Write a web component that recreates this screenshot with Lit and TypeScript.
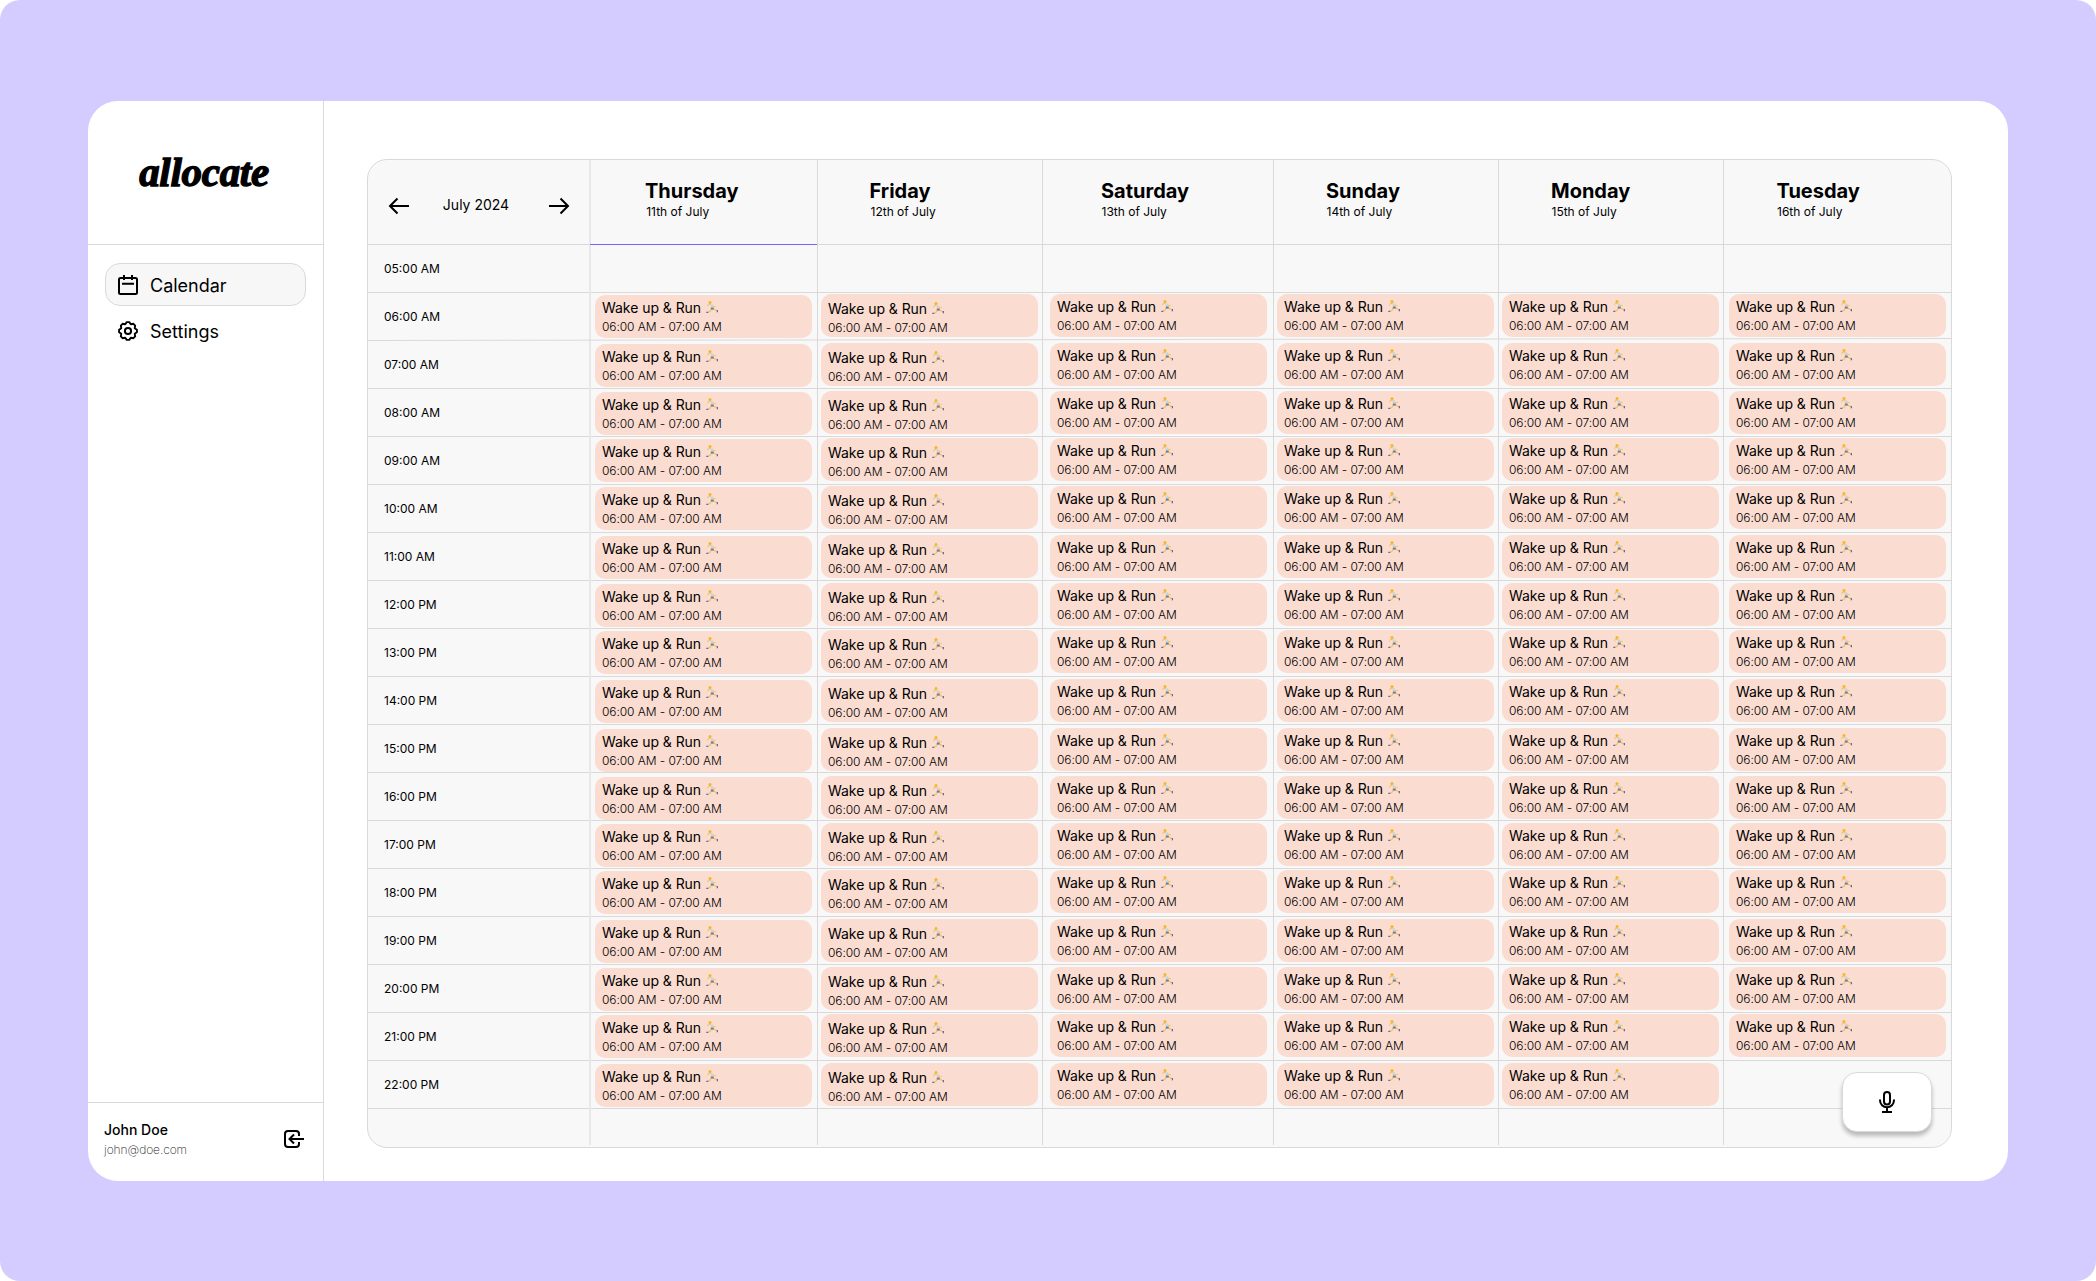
import { LitElement, html, css } from "lit";
import { customElement } from "lit/decorators.js";
import { styleMap } from "lit/directives/style-map.js";

interface Day {
  name: string;
  date: string;
  headPad: number;
  nudge: number;
  width: number;
  inset: number;
  lift: number;
  textDrop: number;
  count: number;
}

const DAYS: Day[] = [
  { name: "Thursday", date: "11th of July", headPad: 55, nudge: 1.2, width: 228, inset: 4, lift: 0, textDrop: 0, count: 17 },
  { name: "Friday", date: "12th of July", headPad: 51.5, nudge: 1, width: 225, inset: 3, lift: 1, textDrop: 2, count: 17 },
  { name: "Saturday", date: "13th of July", headPad: 58, nudge: 0.5, width: 231, inset: 7, lift: 1, textDrop: 0, count: 17 },
  { name: "Sunday", date: "14th of July", headPad: 52, nudge: 0.5, width: 225, inset: 3, lift: 1, textDrop: 0, count: 17 },
  { name: "Monday", date: "15th of July", headPad: 52, nudge: 0.5, width: 225, inset: 3, lift: 1, textDrop: 0, count: 17 },
  { name: "Tuesday", date: "16th of July", headPad: 52.5, nudge: 0.5, width: 228, inset: 5, lift: 1, textDrop: 0, count: 16 },
];

const HOURS = ["05:00 AM", "06:00 AM", "07:00 AM", "08:00 AM", "09:00 AM", "10:00 AM", "11:00 AM", "12:00 PM", "13:00 PM", "14:00 PM", "15:00 PM", "16:00 PM", "17:00 PM", "18:00 PM", "19:00 PM", "20:00 PM", "21:00 PM", "22:00 PM"];

// Gap between an hour line and the event below it, one per hour from 6 AM.
const GAPS = [2, 3, 3, 2, 2, 3, 3, 2, 3, 4, 4, 3, 2, 3, 3, 2, 3];

// Outline of the settings gear: eight blunt teeth around (10, 10).
const gearPoints = Array.from({ length: 8 }, (_, i) =>
  [[-8, 9], [8, 9], [22.5, 7.3]].map(([offset, r]) => {
    const a = ((i * 45 + offset) * Math.PI) / 180;
    return `${(10 + r * Math.sin(a)).toFixed(2)},${(10 - r * Math.cos(a)).toFixed(2)}`;
  }).join(" ")
).join(" ");

const runner = html`<svg class="runner" viewBox="0 0 12 12">
  <path d="M4.6 3.4 L2 3.6 L1.6 5.4 M6.6 4 L8 6 L9.8 5.4" stroke="#f3c75c" stroke-width="1" fill="none" />
  <path d="M4.3 3 L6.8 3.2 L7.4 7 L5 7.2Z" fill="#cdd5dc" />
  <path d="M5 6.6 L7.5 6.6 L8.2 8.6 L5.6 8.8 L4.6 8.4Z" fill="#7d7f86" />
  <path d="M5 8.4 L3.8 10.6 L2.2 11 M7.8 8.2 L10.8 9.8" stroke="#f0bf4e" stroke-width="1.1" fill="none" />
  <path d="M0.3 11.3 L2.3 11.3 M11.3 9 L11.3 11.3" stroke="#3c4a9c" stroke-width="1" fill="none" />
  <circle cx="4" cy="1.5" r="1.5" fill="#f5b820" />
</svg>`;

@customElement("app-root")
export class AppRoot extends LitElement {
  static styles = css`
    :host { display: block; width: 2096px; height: 1281px; background: #fff; font-family: Inter, "Liberation Sans", sans-serif; color: #000; }
    * { box-sizing: border-box; }
    svg { display: block; flex: none; fill: none; stroke: #000; stroke-width: 2; }
    .backdrop { height: 1281px; padding: 101px 88px 100px; background: #d4ccff; border-radius: 20px; }
    .window { height: 1080px; display: flex; background: #fff; border-radius: 30px; overflow: hidden; }
    .sidebar { width: 236px; border-right: 1px solid #d9d9d9; display: flex; flex-direction: column; }
    .brand { height: 144px; border-bottom: 1px solid #d9d9d9; display: flex; justify-content: center; padding: 43px 3px 0 0; }
    .logo { font: italic 700 41px/56px "Liberation Serif", serif; letter-spacing: -0.3px; -webkit-text-stroke: 1.3px #000; }
    .nav { flex: 1; padding: 18px 17px; display: flex; flex-direction: column; gap: 3px; }
    .item { height: 43px; border: 1px solid transparent; border-radius: 15px; display: flex; align-items: center; gap: 12px; padding-left: 12px; font-size: 18px; line-height: 22px; }
    .item span { margin-top: 2px; }
    .item.active { background: #f7f7f7; border-color: #d9d9d9; }
    .user { height: 79px; border-top: 1px solid #d9d9d9; display: flex; justify-content: space-between; padding: 18px 19px 0 16px; }
    .user-name { font-size: 14px; line-height: 18px; font-weight: 500; }
    .mail { font-size: 12px; line-height: 15px; font-weight: 250; letter-spacing: -0.08px; color: #222; margin-top: 3px; }
    .exit { margin-top: 9px; }
    .main { flex: 1; padding: 58px 56px 33px 43px; }
    .calendar { position: relative; height: 989px; width: 1585px; border: 1px solid #d9d9d9; border-radius: 20px; background: #f8f8f8; display: flex; overflow: hidden; }
    .times { width: 221px; }
    .col-head { height: 85px; border-bottom: 1px solid #d9d9d9; }
    .month { display: flex; align-items: center; justify-content: space-between; padding: 7px 19px 0 20px; font-size: 14px; }
    .month span { margin: 0 6px 2px 0; }
    .hour { height: 48px; border-bottom: 1px solid #d9d9d9; padding-left: 16px; font-size: 12px; line-height: 48px; }
    .day { height: 985px; border-left: 1px solid #d9d9d9; }
    .day:nth-child(2) { border-left: 2px solid #e8e8e8; }
    .day:nth-child(2) .col-head { border-bottom-color: #7b61ff; margin-left: -1px; }
    .day-name { font-size: 20px; line-height: 24px; font-weight: 700; padding-top: 19px; }
    .date { font-size: 12px; line-height: 15px; margin-top: 1px; }
    .slot { height: 48px; border-bottom: 1px solid #d9d9d9; }
    .hour.drift, .slot.drift { border-bottom-color: transparent; }
    .drift-line { position: absolute; left: 0; top: 179px; width: 1583px; height: 1px; background: #d9d9d9; transform: rotate(-0.07deg); }
    .event { display: flow-root; position: relative; width: 217px; height: 43px; border-radius: 10px; background: #fbdcd1; padding-left: 7px; }
    .title { display: flex; gap: 5px; font-size: 14px; line-height: 17px; letter-spacing: -0.05px; }
    .span { font-size: 12px; line-height: 15px; font-weight: 300; letter-spacing: -0.08px; margin-top: 3px; }
    .runner { width: 12px; height: 12px; margin-top: 2px; stroke: none; }
    .mic { position: absolute; right: 19px; bottom: 15px; width: 90px; height: 60px; border: 1px solid #d9d9d9; border-radius: 15px; background: #fff; box-shadow: 0 4px 4px rgba(0, 0, 0, 0.25); display: flex; align-items: center; justify-content: center; }
  `;

  private dayColumn(d: Day) {
    return html`<section class="day" style=${styleMap({ width: d.width + "px" })}>
      <header class="col-head" style=${styleMap({ paddingLeft: d.headPad + "px" })}>
        <div class="day-name">${d.name}</div>
        <div class="date" style=${styleMap({ paddingLeft: d.nudge + "px" })}>${d.date}</div>
      </header>
      <div class="slot"></div>
      ${GAPS.map((gap, i) => html`<div class="slot ${i === 0 ? "drift" : ""}">
        ${i < d.count
          ? html`<article class="event" style=${styleMap({ top: gap - d.lift + "px", marginLeft: d.inset + "px" })}>
              <div class="title" style=${styleMap({ marginTop: 4 + d.textDrop + "px" })}>Wake up &amp; Run ${runner}</div>
              <div class="span">06:00 AM - 07:00 AM</div>
            </article>`
          : null}
      </div>`)}
    </section>`;
  }

  render() {
    return html`<div class="backdrop"><div class="window">
      <aside class="sidebar">
        <div class="brand"><div class="logo">allocate</div></div>
        <nav class="nav">
          <div class="item active">
            <svg width="20" height="20" viewBox="0 0 20 20"><rect x="1" y="3" width="18" height="16" rx="1.5" /><path d="M6 0v5M14 0v5M4 8.7h12" /></svg>
            <span>Calendar</span>
          </div>
          <div class="item">
            <svg width="20" height="20" viewBox="0 0 20 20"><polygon stroke-linejoin="round" stroke-width="1.9" points=${gearPoints} /><circle cx="10" cy="10" r="3.1" /></svg>
            <span>Settings</span>
          </div>
        </nav>
        <footer class="user">
          <div><div class="user-name">John Doe</div><div class="mail">john@doe.com</div></div>
          <svg class="exit" width="20" height="20" viewBox="0 0 20 20"><path d="M15 6V4a3 3 0 0 0-3-3H4a3 3 0 0 0-3 3v10a3 3 0 0 0 3 3h8a3 3 0 0 0 3-3v-2M20 9H5.5M10 4.5 5.5 9l4.5 4.5" /></svg>
        </footer>
      </aside>
      <main class="main">
        <div class="calendar">
          <div class="times">
            <div class="col-head month">
              <svg width="22" height="18" viewBox="0 0 22 18"><path d="M21 9H2M9.5 1.5 2 9l7.5 7.5" /></svg>
              <span>July 2024</span>
              <svg width="22" height="18" viewBox="0 0 22 18"><path d="M1 9h19M12.5 1.5 20 9l-7.5 7.5" /></svg>
            </div>
            ${HOURS.map((h, i) => html`<div class="hour ${i === 1 ? "drift" : ""}">${h}</div>`)}
          </div>
          ${DAYS.map((d) => this.dayColumn(d))}
          <div class="drift-line"></div>
          <div class="mic"><svg width="18" height="24" viewBox="0 0 18 24"><rect x="6" y="2" width="6" height="12.5" rx="3" /><path d="M2 9.5v.8a7 7 0 0 0 14 0v-.8M9 17.5v4.5M4 22h10" /></svg></div>
        </div>
      </main>
    </div></div>`;
  }
}
